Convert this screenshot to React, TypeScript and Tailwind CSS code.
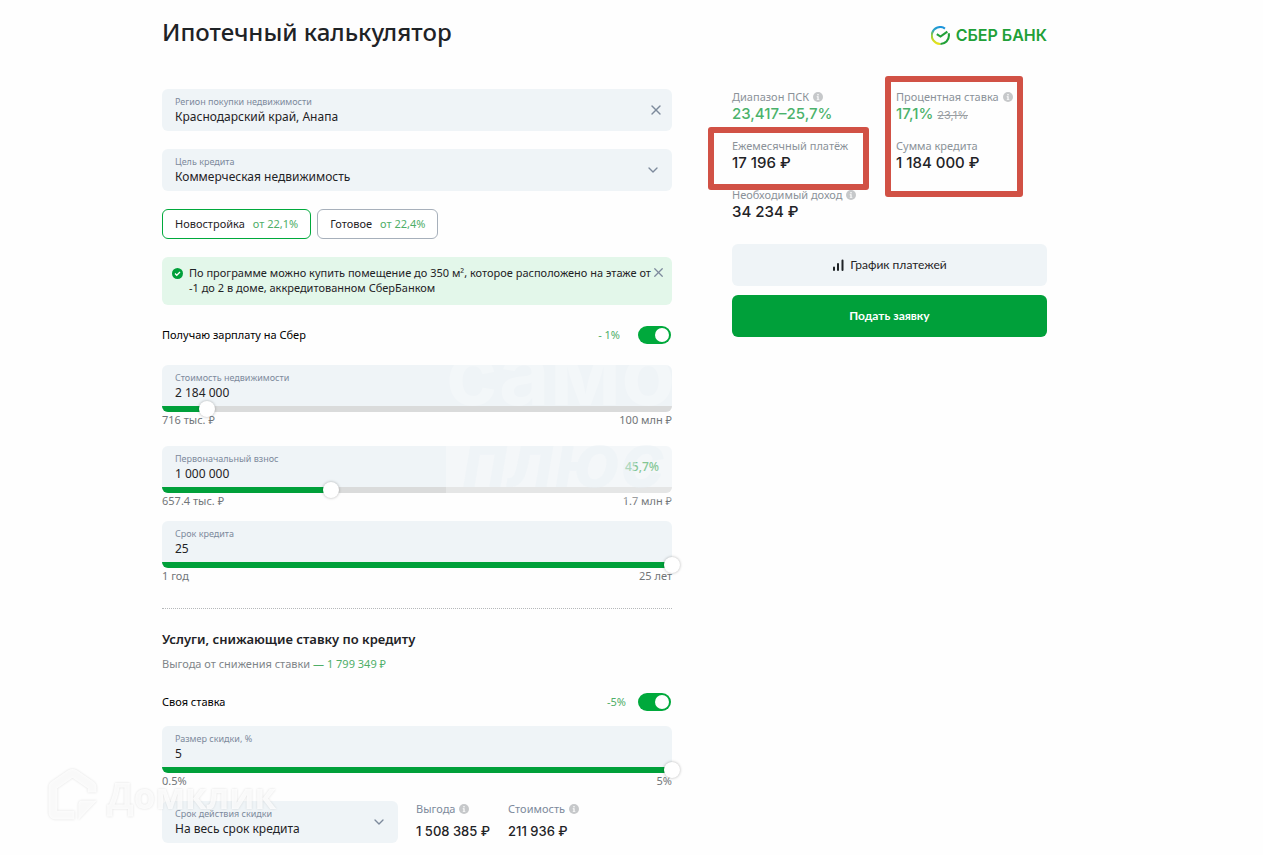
import { useId, useState } from 'react';
import type { ReactNode } from 'react';
import { ChevronDown, X } from 'lucide-react';
import clsx from 'clsx';

interface FieldProps {
  label: string;
  value: string;
}

interface SliderFieldProps extends FieldProps {
  min: string;
  max: string;
  position: number;
  hint?: string;
}

function InfoIcon() {
  return (
    <svg viewBox="0 0 20 20" className="w-[10px] h-[10px] shrink-0" aria-hidden="true">
      <circle cx="10" cy="10" r="10" fill="#c6c8ca" />
      <circle cx="10" cy="5.4" r="1.6" fill="#fff" />
      <path d="M7.5 8.6h3.7v5.2h1.4v1.7H7.6v-1.7h1.3v-3.5H7.5z" fill="#fff" />
    </svg>
  );
}

function SberLogo() {
  return (
    <a href="#" className="flex items-center gap-1.5 pt-1.5 text-[#21a038]" aria-label="СберБанк">
      <svg viewBox="0 0 36 36" className="w-[19px] h-[19px]" fill="none" aria-hidden="true">
        <defs>
          <linearGradient id="ring" x1="22" y1="2" x2="14" y2="34" gradientUnits="userSpaceOnUse">
            <stop offset="0" stopColor="#1c93dd" />
            <stop offset=".3" stopColor="#2aa5c0" />
            <stop offset=".6" stopColor="#8ecb3c" />
            <stop offset="1" stopColor="#e8e21c" />
          </linearGradient>
        </defs>
        <path d="M26.5 4.8A16 16 0 1 0 18 34" stroke="url(#ring)" strokeWidth="4" />
        <path d="M18 34c9 0 16-7 16-16 0-1.6-.2-3-.6-4.4" stroke="#21a038" strokeWidth="4" />
        <path d="M11 15.5l7 4.5L31 10.5" stroke="#21a038" strokeWidth="4" />
      </svg>
      <span className="font-['Inter',sans-serif] text-[16px] leading-5 font-semibold">СБЕР БАНК</span>
    </a>
  );
}

function SelectField({ label, value }: FieldProps) {
  const id = useId();
  return (
    <div className="relative rounded-md bg-[#eff4f7] px-[13px] py-1.5">
      <label htmlFor={id} className="block text-[9px] leading-[14px] text-[#7d8a9c]">
        {label}
      </label>
      <select id={id} className="block w-full appearance-none bg-transparent text-[12px] leading-4 outline-none">
        <option>{value}</option>
      </select>
      <ChevronDown size={16} className="absolute right-[11px] top-[13px] text-[#7d8a9c] pointer-events-none" />
    </div>
  );
}

function SliderField({ label, value, min, max, position, hint }: SliderFieldProps) {
  const id = useId();
  const [pos, setPos] = useState(position);

  return (
    <div>
      <div className="rounded-md bg-[#eff4f7] overflow-hidden">
        <div className="flex items-center px-[13px] pt-1.5 pb-[5px]">
          <div className="flex-1">
            <label htmlFor={id} className="block text-[9px] leading-[14px] text-[#7d8a9c]">
              {label}
            </label>
            <input
              id={id}
              type="text"
              defaultValue={value}
              className="block w-full h-4 bg-transparent text-[12px] leading-4 outline-none"
            />
          </div>
          {hint && <span className="text-[12px] leading-4 font-medium text-[#4fae68]">{hint}</span>}
        </div>
        <div className="h-1.5 bg-[#dadbdb]">
          <div className="h-full bg-[#00a03a]" style={{ width: `${pos}%` }} />
        </div>
      </div>
      {/* the thumb's centre travels over the whole track, so the input is wider by half a thumb on each side */}
      <input
        type="range"
        min={0}
        max={100}
        step={0.1}
        value={pos}
        aria-label={label}
        onChange={(e) => setPos(Number(e.target.value))}
        className="relative block h-4 -mt-[11px] -mb-[5px] -mx-2 w-[calc(100%+16px)] appearance-none bg-transparent outline-none [&::-webkit-slider-thumb]:appearance-none [&::-webkit-slider-thumb]:w-4 [&::-webkit-slider-thumb]:h-4 [&::-webkit-slider-thumb]:rounded-full [&::-webkit-slider-thumb]:bg-white [&::-webkit-slider-thumb]:shadow-[0_0_3px_rgba(0,0,0,0.3)]"
      />
      <div className="flex justify-between text-[11px] leading-4 text-[#717578]">
        <span>{min}</span>
        <span>{max}</span>
      </div>
    </div>
  );
}

function ToggleRow({ label, hint, wide }: { label: string; hint: string; wide?: boolean }) {
  return (
    <label className="flex items-center h-[18px] pr-px text-[11px] leading-4 text-black">
      <span className="flex-1">{label}</span>
      <span className={clsx('text-[#4fae68]', wide ? 'mr-[18px]' : 'mr-3')}>{hint}</span>
      <input
        type="checkbox"
        role="switch"
        defaultChecked
        className="appearance-none w-[33px] h-[18px] rounded-full bg-[#c3c8cd] checked:bg-[#00a93c] before:block before:w-[14px] before:h-[14px] before:m-0.5 before:rounded-full before:bg-white checked:before:ml-[17px]"
      />
    </label>
  );
}

function OfferButton({ title, rate, selected }: { title: string; rate: string; selected?: boolean }) {
  return (
    <button
      type="button"
      className={clsx(
        'h-[30px] px-3 rounded-md border bg-white text-[11px] leading-4',
        selected ? 'border-[#00a93c]' : 'border-[#a7b0bb]'
      )}
    >
      {title}
      <span className="ml-2 text-[#4fae68]">{rate}</span>
    </button>
  );
}

function Stat({ label, info, children }: { label: string; info?: boolean; children: ReactNode }) {
  return (
    <div>
      <dt className="flex items-center gap-1 text-[11px] leading-[14px] text-[#8b9299] whitespace-nowrap">
        {label}
        {info && <InfoIcon />}
      </dt>
      <dd className="h-5 font-['Inter',sans-serif] text-[15px] leading-5 font-medium whitespace-nowrap">{children}</dd>
    </div>
  );
}

function Summary({ label, value }: FieldProps) {
  return (
    <div>
      <dt className="flex items-center gap-1 text-[11px] leading-4 text-[#7d8a9c] whitespace-nowrap">
        {label}
        <InfoIcon />
      </dt>
      <dd className="mt-1 font-['Inter',sans-serif] text-[13px] leading-5 font-medium whitespace-nowrap">{value}</dd>
    </div>
  );
}

function PartnerWatermark() {
  return (
    <div
      className="absolute left-[284px] top-[-27px] font-['Inter',sans-serif] font-bold pointer-events-none select-none"
      aria-hidden="true"
    >
      <div className="h-[102px] text-[88px] leading-[70px] text-white/25">самолет</div>
      <div className="h-[60px] w-[360px] bg-white/30 pl-4 text-[76px] leading-[38px] italic text-[#e9f0f4]/40">плюс</div>
    </div>
  );
}

function DomclickWatermark() {
  return (
    <div
      className="absolute left-12 bottom-8 flex items-center gap-[10px] pointer-events-none select-none text-white/80 drop-shadow-[0_0_1px_rgba(0,0,0,0.15)]"
      aria-hidden="true"
    >
      <svg viewBox="0 0 50 56" className="w-[49px] h-[55px]" fill="none">
        <path
          d="M27 48H8q-3 0-3-3V20q0-2 2-3L23 6q2-1 4 0l16 11q2 1 2 3v5"
          stroke="currentColor"
          strokeWidth="9"
          strokeLinejoin="round"
        />
        <path d="M31 53V37q0-4 4-4h15z" fill="currentColor" />
      </svg>
      <span className="font-['Open_Sans',sans-serif] text-[35px] leading-10 font-bold">Домклик</span>
    </div>
  );
}

export default function App() {
  return (
    <main className="relative overflow-hidden bg-[#fefefe] pl-[162px] pr-[216px] pt-4 pb-3 font-['Noto_Sans',sans-serif] text-[#1f2326]">
      <header className="flex items-center justify-between">
        <h1 className="text-[24px] leading-8 font-medium">Ипотечный калькулятор</h1>
        <SberLogo />
      </header>

      <div className="mt-[41px] grid grid-cols-[minmax(0,34fr)_minmax(0,21fr)] gap-[60px] items-start">
        <form>
          <div className="flex items-center rounded-md bg-[#eff4f7] pl-[13px] pr-2 py-1.5">
            <div className="flex-1">
              <label htmlFor="region" className="block text-[9px] leading-[14px] text-[#7d8a9c]">
                Регион покупки недвижимости
              </label>
              <input
                id="region"
                type="text"
                defaultValue="Краснодарский край, Анапа"
                className="block w-full h-4 bg-transparent text-[12px] leading-4 outline-none"
              />
            </div>
            <button type="button" aria-label="Очистить">
              <X size={16} className="text-[#7d8a9c]" />
            </button>
          </div>

          <div className="mt-[18px]">
            <SelectField label="Цель кредита" value="Коммерческая недвижимость" />
          </div>

          <div className="mt-[18px] flex gap-1.5">
            <OfferButton title="Новостройка" rate="от 22,1%" selected />
            <OfferButton title="Готовое" rate="от 22,4%" />
          </div>

          <div className="mt-[18px] flex items-start rounded-md bg-[#e3f7ea] pl-[10px] pr-[6px] pt-2 pb-[10px]">
            <svg viewBox="0 0 22 22" className="mt-[3px] mr-1.5 w-[11px] h-[11px] shrink-0" fill="none" aria-hidden="true">
              <circle cx="11" cy="11" r="11" fill="#00a03a" />
              <path d="M6 11l3.5 3.5L16 8" stroke="#fff" strokeWidth="2.6" />
            </svg>
            <p className="flex-1 -mr-2 text-[11px] leading-[15px]">
              По программе можно купить помещение до 350 м², которое расположено на этаже от -1 до 2 в доме,
              аккредитованном СберБанком
            </p>
            <button type="button" aria-label="Закрыть">
              <X size={15} className="text-[#7d8a9c]" />
            </button>
          </div>

          <div className="my-[21px]">
            <ToggleRow label="Получаю зарплату на Сбер" hint="- 1%" wide />
          </div>

          <div className="relative">
            <SliderField label="Стоимость недвижимости" value="2 184 000" min="716 тыс. ₽" max="100 млн ₽" position={8.8} />
            <div className="mt-[18px] mb-3">
              <SliderField
                label="Первоначальный взнос"
                value="1 000 000"
                min="657.4 тыс. ₽"
                max="1.7 млн ₽"
                position={33.1}
                hint="45,7%"
              />
            </div>
            <SliderField label="Срок кредита" value="25" min="1 год" max="25 лет" position={100} />
            <PartnerWatermark />
          </div>

          <section className="mt-6 border-t border-dotted border-[#b5b8ba] pt-5">
            <h2 className="text-[13px] leading-5 font-semibold">Услуги, снижающие ставку по кредиту</h2>
            <p className="mt-[7px] text-[11px] leading-4 text-[#7f8589]">
              Выгода от снижения ставки <span className="text-[#4fae68]">— 1 799 349 ₽</span>
            </p>
            <div className="mt-[21px] mb-[15px]">
              <ToggleRow label="Своя ставка" hint="-5%" />
            </div>
            <SliderField label="Размер скидки, %" value="5" min="0.5%" max="5%" position={100} />
            <div className="mt-3 flex items-start">
              <div className="w-[236px] mr-[18px]">
                <SelectField label="Срок действия скидки" value="На весь срок кредита" />
              </div>
              <dl className="flex gap-[18px]">
                <Summary label="Выгода" value="1 508 385 ₽" />
                <Summary label="Стоимость" value="211 936 ₽" />
              </dl>
            </div>
          </section>
        </form>

        <aside>
          <div className="relative pt-px">
            <dl className="grid grid-cols-[164px_1fr] gap-y-[15px]">
              <Stat label="Диапазон ПСК" info>
                <span className="text-[#4bb26b]">23,417–25,7%</span>
              </Stat>
              <Stat label="Процентная ставка" info>
                <span className="text-[#4bb26b]">17,1%</span>{' '}
                <s className="text-[11px] font-normal text-[#9a9fa3]">23,1%</s>
              </Stat>
              <Stat label="Ежемесячный платёж">17 196 ₽</Stat>
              <Stat label="Сумма кредита">1 184 000 ₽</Stat>
              <Stat label="Необходимый доход" info>
                34 234 ₽
              </Stat>
            </dl>
            {/* highlighted figures */}
            <div className="absolute -left-6 top-[38px] w-[161px] h-[63px] rounded-[3px] border-6 border-[#d15145]" />
            <div className="absolute left-[153px] top-[-13px] w-[138px] h-[121px] rounded-[3px] border-6 border-[#d15145]" />
          </div>

          <button
            type="button"
            className="mt-[22px] flex items-center justify-center gap-1.5 w-full h-[42px] rounded-md bg-[#eff4f7] font-['Lato',sans-serif] text-[12px] leading-4"
          >
            <svg viewBox="0 0 12 12" className="w-3 h-3" stroke="currentColor" strokeWidth="2" strokeLinecap="round" aria-hidden="true">
              <path d="M2 8.5V11M6 5v6M10.5 1.5V11" />
            </svg>
            График платежей
          </button>
          <button
            type="button"
            className="mt-[9px] w-full h-[42px] rounded-md bg-[#00a03a] font-['Lato',sans-serif] text-[12px] leading-4 font-bold text-white"
          >
            Подать заявку
          </button>
        </aside>
      </div>

      <DomclickWatermark />
    </main>
  );
}
